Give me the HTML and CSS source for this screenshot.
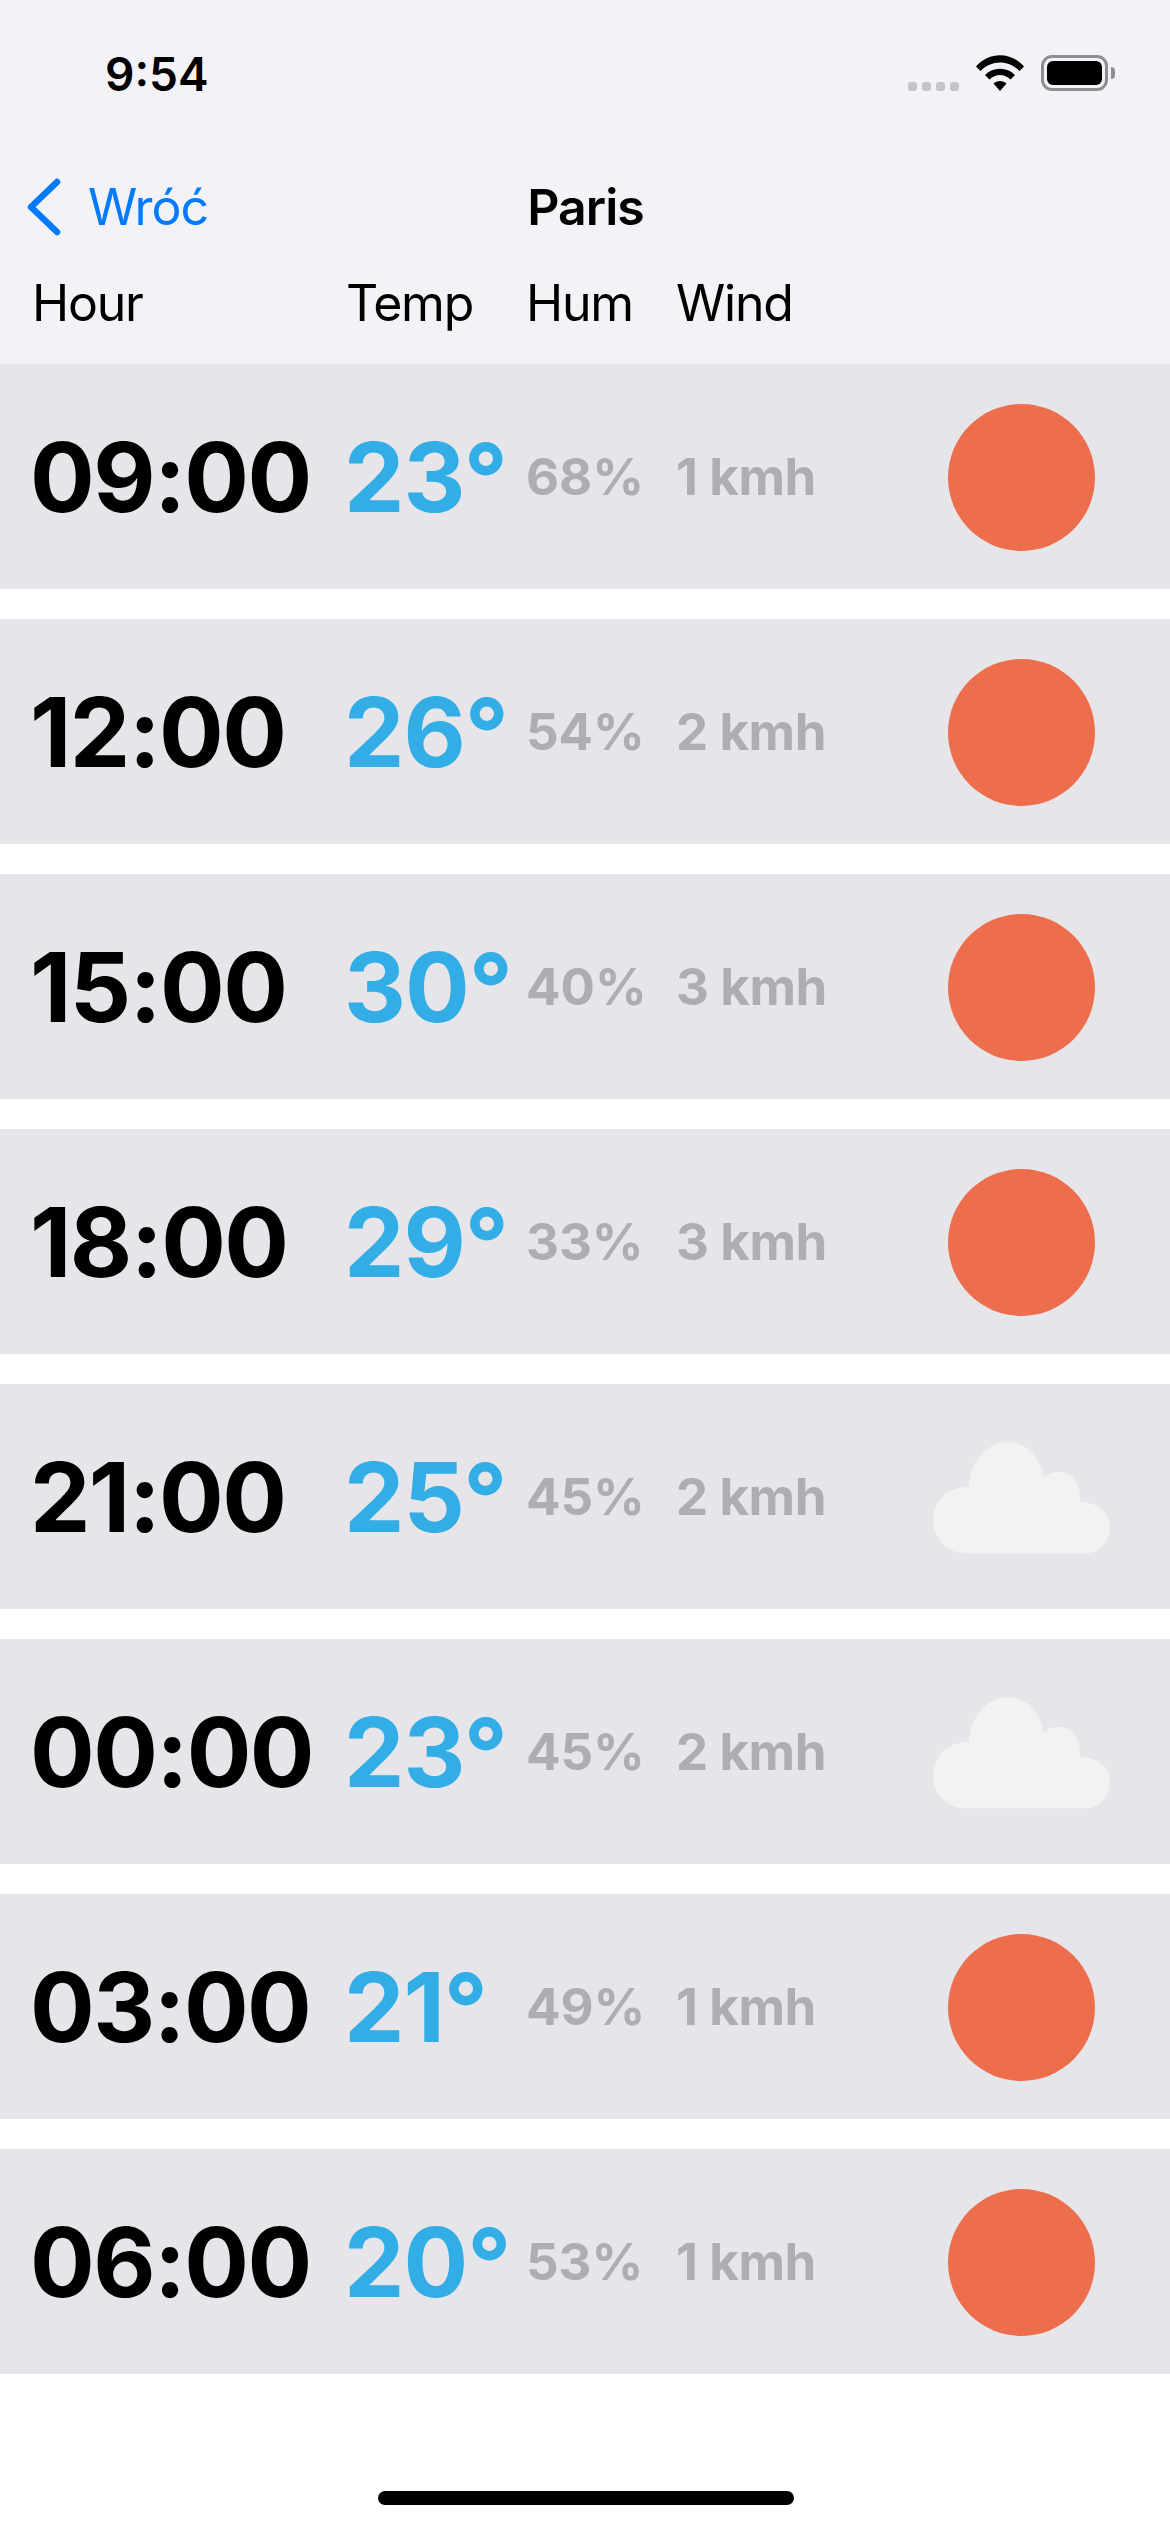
FILE: index.html
```html
<!DOCTYPE html>
<html lang="en">
<head>
    <meta charset="UTF-8">
    <title>Paris</title>
    <link rel="stylesheet" href="styles.css">
</head>
<body>
    <header class="top">
        <div class="status">
            <span class="clock">9:54</span>
            <div class="status-icons">
                <div class="dots"><i></i><i></i><i></i><i></i></div>
                <svg class="wifi" width="48" height="36" viewBox="0 0 48 36">
                    <path d="M0 11.5 C13 -3.5 35 -3.5 48 11.5 L43.5 16 C32.5 4.5 15.5 4.5 4.5 16 Z"/>
                    <path d="M9 20 C17 11.5 31 11.5 39 20 L34.5 24.5 C28.5 18.5 19.5 18.5 13.5 24.5 Z"/>
                    <path d="M17.5 28.5 C21 25 27 25 30.5 28.5 L24 36 Z"/>
                </svg>
                <div class="battery"><div class="battery-level"></div></div>
                <div class="battery-cap"></div>
            </div>
        </div>
        <nav class="nav">
            <a class="back">
                <svg width="34" height="58" viewBox="0 0 34 58"><path d="M30 4 L4 29 L30 54" fill="none" stroke="#007aff" stroke-width="6.5" stroke-linecap="round" stroke-linejoin="round"/></svg>
                <span>Wróć</span>
            </a>
            <div class="title">Paris</div>
        </nav>
        <div class="columns">
            <span>Hour</span>
            <span>Temp</span>
            <span>Hum</span>
            <span>Wind</span>
        </div>
    </header>

    <main class="hours">
        <div class="row">
            <div class="hour">09:00</div><div class="temp">23°</div><div class="hum">68%</div><div class="wind">1 kmh</div>
            <div class="sun"></div>
        </div>
        <div class="row">
            <div class="hour">12:00</div><div class="temp">26°</div><div class="hum">54%</div><div class="wind">2 kmh</div>
            <div class="sun"></div>
        </div>
        <div class="row">
            <div class="hour">15:00</div><div class="temp">30°</div><div class="hum">40%</div><div class="wind">3 kmh</div>
            <div class="sun"></div>
        </div>
        <div class="row">
            <div class="hour">18:00</div><div class="temp">29°</div><div class="hum">33%</div><div class="wind">3 kmh</div>
            <div class="sun"></div>
        </div>
        <div class="row">
            <div class="hour">21:00</div><div class="temp">25°</div><div class="hum">45%</div><div class="wind">2 kmh</div>
            <svg class="cloud" width="178" height="112" viewBox="0 0 178 112"><path d="M33 111.500 A33 33 0 0 1 33 45 Q34 45 36 45.500 C36 20 55 0 74 0 C94 0 108 16 111 36 C116 30 123 30 127 30 C141 30 148 44 147 60 C164 60 177 70 177 85 C177 100 166 111.500 152 111.500 Z" fill="#f2f2f0"/></svg>
        </div>
        <div class="row">
            <div class="hour">00:00</div><div class="temp">23°</div><div class="hum">45%</div><div class="wind">2 kmh</div>
            <svg class="cloud" width="178" height="112" viewBox="0 0 178 112"><path d="M33 111.500 A33 33 0 0 1 33 45 Q34 45 36 45.500 C36 20 55 0 74 0 C94 0 108 16 111 36 C116 30 123 30 127 30 C141 30 148 44 147 60 C164 60 177 70 177 85 C177 100 166 111.500 152 111.500 Z" fill="#f2f2f0"/></svg>
        </div>
        <div class="row">
            <div class="hour">03:00</div><div class="temp">21°</div><div class="hum">49%</div><div class="wind">1 kmh</div>
            <div class="sun"></div>
        </div>
        <div class="row">
            <div class="hour">06:00</div><div class="temp">20°</div><div class="hum">53%</div><div class="wind">1 kmh</div>
            <div class="sun"></div>
        </div>
    </main>

    <div class="home-indicator"></div>
</body>
</html>
```

FILE: styles.css
```css
body {
    margin: 0;
    height: 2532px;
    display: flex;
    flex-direction: column;
    overflow: hidden;
    font-family: Inter, "Liberation Sans", sans-serif;
    background: #fff;
    color: #000;
}

.top {
    height: 364px;
    background: #f2f2f7;
    display: flex;
    flex-direction: column;
}

.status {
    height: 169px;
    box-sizing: border-box;
    padding: 44px 55px 0 105px;
    display: flex;
    justify-content: space-between;
    align-items: flex-start;
}

.clock {
    font-size: 46px;
    line-height: 60px;
    font-weight: 600;
}

.status-icons {
    display: flex;
    align-items: flex-start;
    padding-top: 11px;
}

.dots {
    display: flex;
    gap: 5px;
    margin-top: 27px;
    margin-right: 17px;
}

.dots i {
    width: 9px;
    height: 9px;
    border-radius: 3px;
    background: #c4c4c9;
}

.wifi {
    margin-right: 17px;
}

.battery {
    width: 67px;
    height: 36px;
    box-sizing: border-box;
    border: 3px solid #8e8e92;
    border-radius: 11px;
    padding: 3px;
}

.battery-level {
    height: 100%;
    background: #000;
    border-radius: 6px;
}

.battery-cap {
    width: 4px;
    height: 12px;
    margin: 12px 0 0 3px;
    background: #8e8e92;
    border-radius: 0 4px 4px 0;
}

.nav {
    height: 76px;
    padding-left: 27px;
    display: flex;
    align-items: center;
    position: relative;
}

.back {
    display: flex;
    align-items: center;
    gap: 27px;
    color: #007aff;
    font-size: 50px;
    letter-spacing: -1px;
}

.title {
    position: absolute;
    left: 1px;
    right: 0;
    text-align: center;
    font-size: 50px;
    font-weight: 600;
    letter-spacing: -1px;
}

.columns,
.row {
    display: grid;
    grid-template-columns: 314px 180px 150px 1fr;
    padding-left: 33px;
}

.columns {
    margin-top: 28px;
    padding-left: 32px;
    font-size: 50px;
    line-height: 60px;
    letter-spacing: -1.2px;
}

.hours {
    display: flex;
    flex-direction: column;
    gap: 30px;
}

.row {
    height: 225px;
    background: #e5e5ea;
    align-items: center;
    position: relative;
}

.hour {
    font-size: 96px;
    font-weight: 700;
    letter-spacing: -1.6px;
    margin-left: -3px;
}

.temp {
    font-size: 96px;
    font-weight: 700;
    letter-spacing: -1px;
    color: #32ade6;
    margin-left: -3px;
}

.hum,
.wind {
    font-size: 51px;
    font-weight: 700;
    color: #aeaeb2;
    margin-left: -1px;
}

.wind {
    letter-spacing: -0.4px;
}

.sun {
    position: absolute;
    left: 948px;
    top: 40px;
    width: 147px;
    height: 147px;
    border-radius: 50%;
    background: #ed6e4c;
}

.cloud {
    position: absolute;
    left: 933px;
    top: 58px;
}

.home-indicator {
    position: absolute;
    left: 378px;
    top: 2491px;
    width: 416px;
    height: 14px;
    border-radius: 7px;
    background: #000;
}
```
